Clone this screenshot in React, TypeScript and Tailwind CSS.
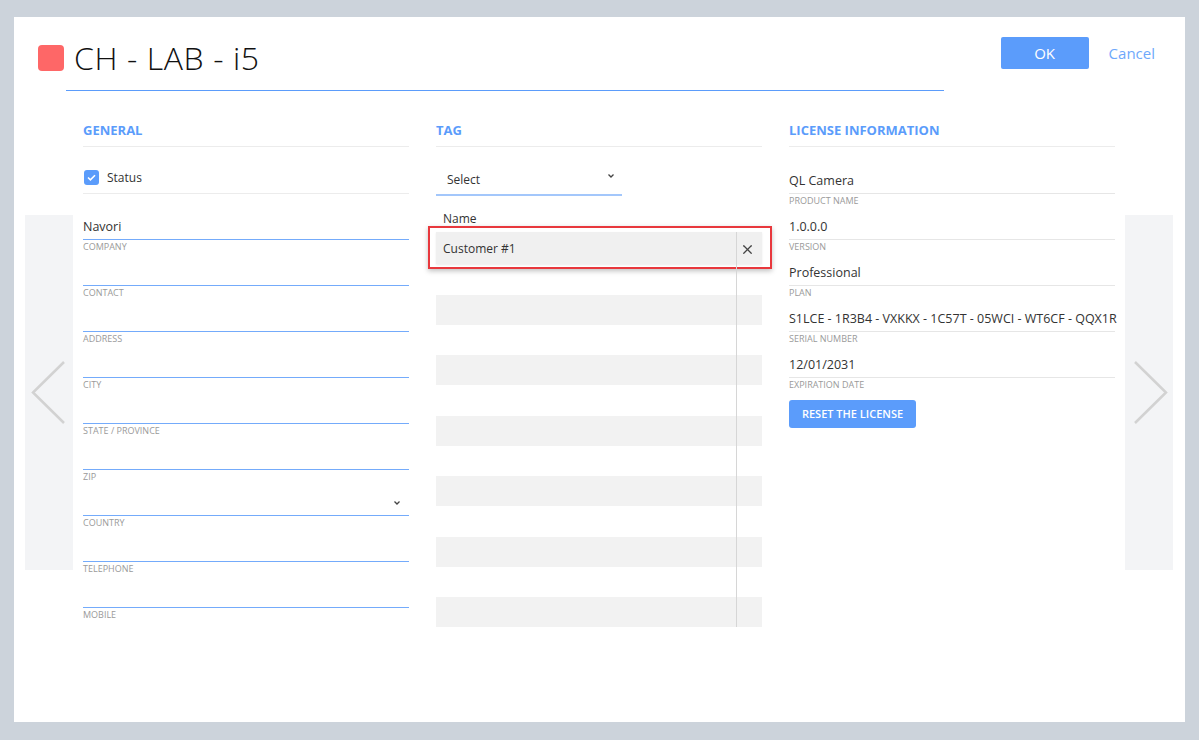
import { X } from "lucide-react";

const generalFields = [
  { label: "Company", value: "Navori" },
  { label: "Contact", value: "" },
  { label: "Address", value: "" },
  { label: "City", value: "" },
  { label: "State / Province", value: "" },
  { label: "Zip", value: "" },
  { label: "Country", value: "", select: true },
  { label: "Telephone", value: "" },
  { label: "Mobile", value: "" },
];

const licenseFields = [
  { label: "Product name", value: "QL Camera" },
  { label: "Version", value: "1.0.0.0" },
  { label: "Plan", value: "Professional" },
  { label: "Serial number", value: "S1LCE - 1R3B4 - VXKKX - 1C57T - 05WCI - WT6CF - QQX1R" },
  { label: "Expiration date", value: "12/01/2031" },
];

function SmallChevron() {
  return (
    <svg width="8" height="6" viewBox="0 0 8 6" fill="none">
      <path d="M1.5 1.5 L4 4 L6.5 1.5" stroke="#444" strokeWidth="1.3" />
    </svg>
  );
}

function SectionTitle({ children }: { children: string }) {
  return (
    <div>
      <div className="h-[32px] pt-[2px] flex items-center text-[13px] font-bold text-[#5b9cfb] uppercase">
        {children}
      </div>
      <div className="h-px bg-[#ececec]" />
    </div>
  );
}

function Field({
  label,
  value,
  select,
  muted,
}: {
  label: string;
  value: string;
  select?: boolean;
  muted?: boolean;
}) {
  return (
    <div>
      <div className="h-[29px] flex items-end justify-between pb-[2px]">
        <span className="text-[12.5px] leading-[20px] text-[#333] whitespace-nowrap">{value}</span>
        {select && (
          <span className="mb-[7px] mr-[8px]">
            <SmallChevron />
          </span>
        )}
      </div>
      <div className={muted ? "h-px bg-[#e6e6e6]" : "h-px bg-[#74abfb]"} />
      <div className="h-[16px] pt-px text-[9px] leading-[12px] text-[#9a9a9a] uppercase">{label}</div>
    </div>
  );
}

function NavArrow({ side }: { side: "left" | "right" }) {
  return (
    <div
      className={
        "absolute top-[198px] w-[48px] h-[355px] bg-[#f3f4f6] " +
        (side === "left" ? "left-[11px]" : "right-[12px]")
      }
    >
      <svg width="48" height="355" viewBox="0 0 48 355" fill="none">
        {side === "left" ? (
          <path d="M39 147 L8 177.5 L39 208" stroke="#d2d2d2" strokeWidth="2.5" />
        ) : (
          <path d="M10 147 L41 177.5 L10 208" stroke="#d2d2d2" strokeWidth="2.5" />
        )}
      </svg>
    </div>
  );
}

export default function App() {
  const tagRows = [0, 1, 2, 3, 4, 5];

  return (
    <div
      className="w-full h-[740px] bg-[#ccd3db] pt-[17px] pl-[14px]"
      style={{ fontFamily: "'Open Sans', 'Liberation Sans', sans-serif" }}
    >
      <div className="relative w-[1171px] h-[705px] bg-white pt-[20px]">
        {/* header */}
        <div className="h-[53px] flex items-start justify-between pl-[24px] pr-[30px]">
          <div className="h-[40px] mt-px flex items-center gap-[10px]">
            <div className="w-[26px] h-[26px] rounded-[4px] bg-[#fe6767]" />
            <div className="text-[32px] font-light tracking-[0.6px] text-[#111] leading-[40px]">
              CH - LAB - i5
            </div>
          </div>
          <div className="flex items-center gap-[20px]">
            <button className="w-[88px] h-[32px] rounded-[2px] bg-[#5b9cfb] text-white text-[15px]">
              OK
            </button>
            <span className="text-[15px] text-[#6ea8fb]">Cancel</span>
          </div>
        </div>
        <div className="ml-[52px] w-[878px] h-px bg-[#5b9cfb]" />

        {/* columns */}
        <div className="ml-[69px] mt-[23px] flex gap-[27px]">
          {/* General */}
          <div className="w-[326px]">
            <SectionTitle>General</SectionTitle>
            <div className="h-[46px] flex items-center pt-[15px]">
              <div className="ml-px w-[15px] h-[15px] rounded-[3px] bg-[#5b9cfb] flex items-center justify-center">
                <svg width="9" height="7" viewBox="0 0 9 7" fill="none">
                  <path d="M1 3.5 L3.4 5.8 L8 1.2" stroke="white" strokeWidth="1.6" />
                </svg>
              </div>
              <span className="ml-[8px] text-[12px] text-[#333]">Status</span>
            </div>
            <div className="h-px bg-[#ececec]" />
            <div className="mt-[16px]">
              {generalFields.map((f) => (
                <Field key={f.label} label={f.label} value={f.value} select={f.select} />
              ))}
            </div>
          </div>

          {/* Tag */}
          <div className="w-[326px]">
            <SectionTitle>Tag</SectionTitle>
            <div className="mt-[17px] w-[186px]">
              <div className="h-[30px] pt-[2px] pl-[11px] pr-[7px] flex items-center justify-between">
                <span className="text-[12px] text-[#333]">Select</span>
                <span className="mb-[8px]">
                  <SmallChevron />
                </span>
              </div>
              <div className="h-[2px] bg-[#a3c7fb]" />
            </div>
            <div className="mt-[15px] pl-[7px] text-[12px] leading-[16px] text-[#333]">Name</div>
            <div className="relative mt-[5px] flex flex-col">
              <div className="relative h-[32px] pt-[2px] bg-[#f0f0f0] flex items-center justify-between pl-[7px] pr-[7px] shadow-[0_1px_2px_rgba(0,0,0,0.08)]">
                <span className="text-[12px] text-[#333]">Customer #1</span>
                <X size={15} strokeWidth={2} className="text-[#444]" />
                <div className="absolute -left-[8px] -right-[10px] -top-[6px] -bottom-[5px] border-2 border-[#e8383d] shadow-[0_2px_5px_rgba(0,0,0,0.25)]" />
              </div>
              {tagRows.map((r) => (
                <div
                  key={r}
                  className={
                    "h-[30px] bg-[#f2f2f2] " + (r === 0 ? "mt-[31px]" : "mt-[30.4px]")
                  }
                />
              ))}
              <div className="absolute top-0 bottom-0 right-[25px] w-px bg-[#d6d6d6]" />
            </div>
          </div>

          {/* License */}
          <div className="w-[326px]">
            <SectionTitle>License Information</SectionTitle>
            <div className="mt-[17px]">
              {licenseFields.map((f) => (
                <Field key={f.label} label={f.label} value={f.value} muted />
              ))}
            </div>
            <button className="mt-[6px] w-[127px] h-[28px] rounded-[3px] bg-[#5b9cfb] text-white text-[11px] font-semibold uppercase">
              Reset the license
            </button>
          </div>
        </div>

        <NavArrow side="left" />
        <NavArrow side="right" />
      </div>
    </div>
  );
}
